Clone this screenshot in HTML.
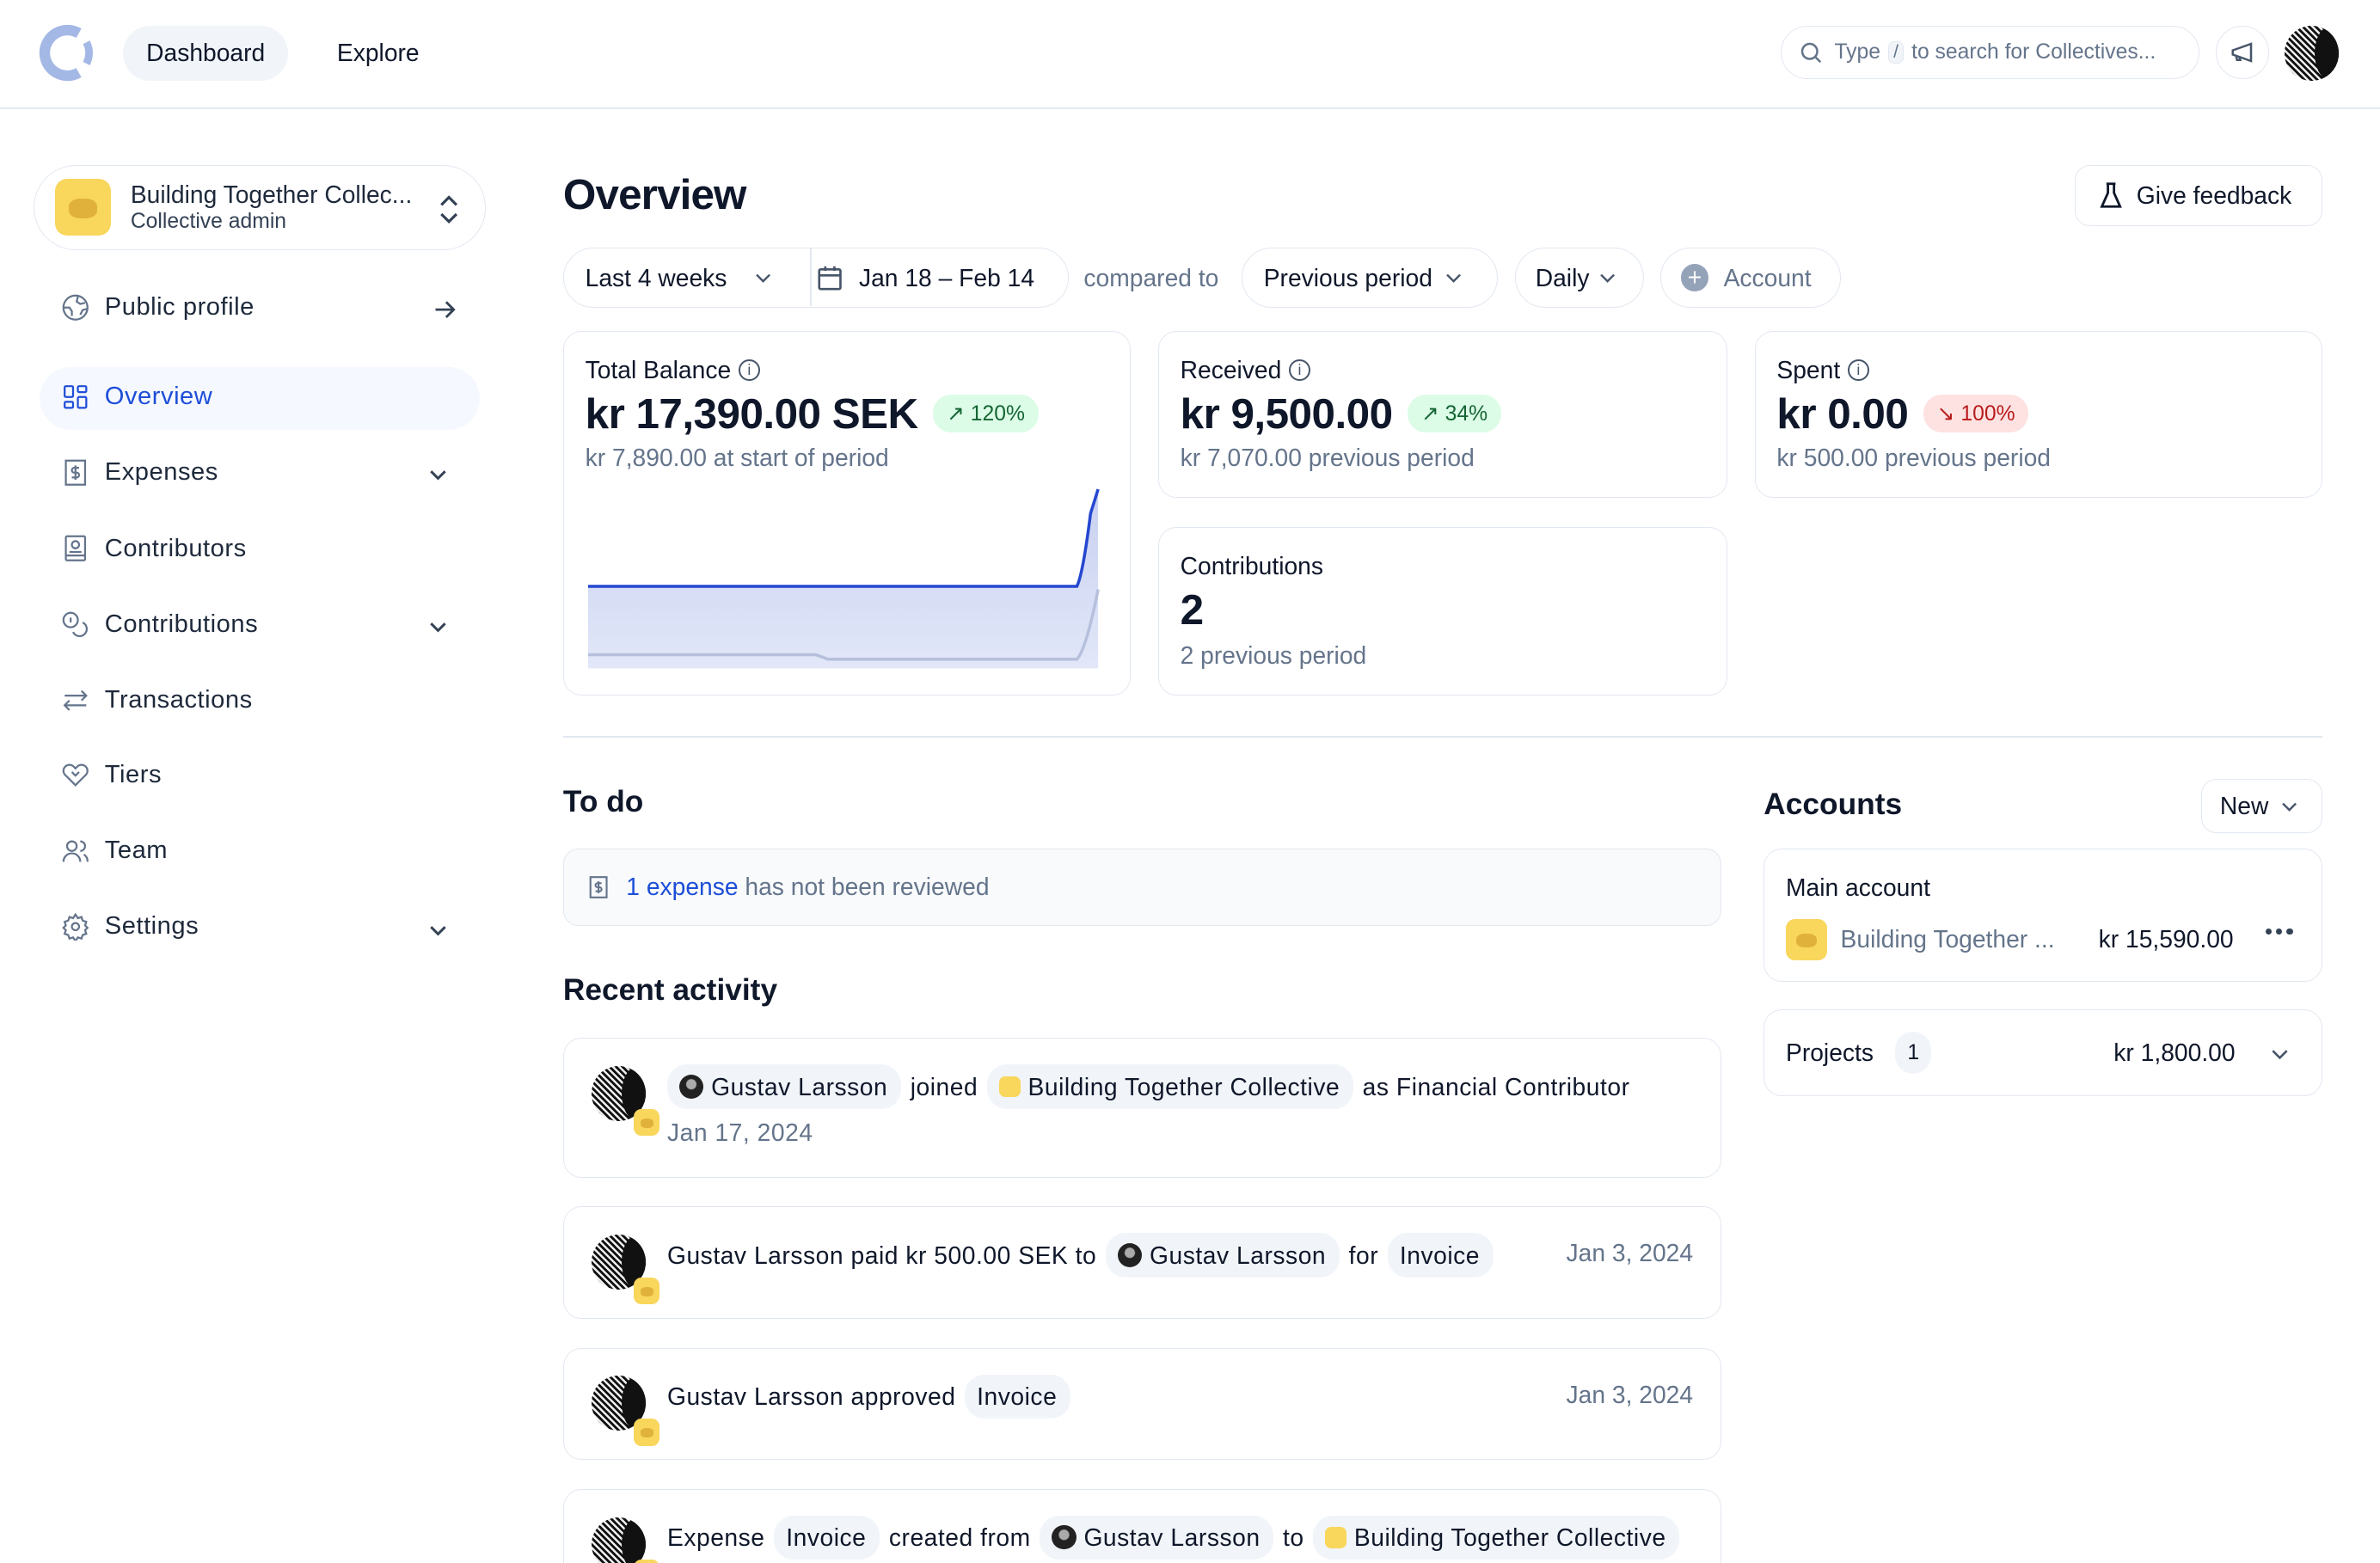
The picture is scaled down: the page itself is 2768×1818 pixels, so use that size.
<!DOCTYPE html>
<html><head><meta charset="utf-8"><style>
*{box-sizing:border-box;margin:0;padding:0}
html,body{width:2768px;height:1818px;overflow:hidden;background:#fff}
#w{zoom:1.76531;width:1568px;height:1030px;position:relative;font-family:"Liberation Sans",sans-serif;color:#0f172a;font-size:16px}
.a{position:absolute}
.b{border:1px solid #e2e8f0}
.g{color:#64748b}
.nav{position:absolute;left:40px;display:flex;align-items:center;font-size:16.5px;color:#1e293b;font-weight:400;letter-spacing:.3px}
.nav svg{width:19px;height:19px;margin-right:10px;stroke:#64748b;fill:none;stroke-width:1.6}
.chev{position:absolute;left:282px;width:13px;height:13px;stroke:#334155;fill:none;stroke-width:1.8}
.card{position:absolute;border:1px solid #e2e8f0;border-radius:12px;background:#fff}
.lbl{font-size:16px;font-weight:500;display:flex;align-items:center}
.big{font-size:28px;font-weight:700;letter-spacing:-.3px}
.pill{display:inline-flex;align-items:center;font-size:14px;border-radius:12px;padding:4px 9px;margin-left:10px}
.btn{position:absolute;border:1px solid #e2e8f0;border-radius:20px;display:flex;align-items:center;font-size:16px;font-weight:500}
.chip{display:inline-flex;align-items:center;background:#f1f5f9;border-radius:13px;height:29px;padding:0 9px 0 8px;margin:0 6px}
.av{width:36px;height:36px;border-radius:50%;background:repeating-linear-gradient(45deg,#111 0 1.5px,#eee 1.5px 3px);position:absolute;overflow:hidden}
.av:after{content:"";position:absolute;left:55%;top:0;width:60%;height:100%;background:#111;border-radius:50%}
.yl{background:#f9d65c;border-radius:5px;position:absolute}
.yl:after{content:"";position:absolute;left:25%;top:35%;width:50%;height:35%;border-radius:40%;background:#d9a933;opacity:.8}
.sm{width:16px;height:16px;border-radius:50%;display:inline-block;margin-right:5px;background:radial-gradient(circle at 50% 40%,#aaa 0 25%,#222 30%)}
.sy{width:14px;height:14px;border-radius:4px;display:inline-block;margin-right:5px;background:#f9d65c}
.act{position:absolute;left:371px;width:763px}
.act .txt{position:absolute;left:68px;font-size:16px;display:flex;align-items:center;height:29px;letter-spacing:.3px;white-space:nowrap}
.date{position:absolute;right:18px;font-size:16px;color:#64748b}
</style></head><body><div id="w">
<!-- header -->
<div class="a" style="left:0;top:71px;width:1568px;height:1px;background:#e2e8f0"></div>
<svg class="a" style="left:25px;top:16px" width="38" height="38" viewBox="0 0 38 38"><path d="M27 6 A15 15 0 1 0 27 32" stroke="#a4b8e6" stroke-width="7" fill="none"/><path d="M32 12 A15 15 0 0 1 32 26" stroke="#a4b8e6" stroke-width="5" fill="none"/></svg>
<div class="a" style="left:81px;top:17px;width:109px;height:36px;border-radius:18px;background:#f1f5f9;font-size:16px;font-weight:500;text-align:center;line-height:36px">Dashboard</div>
<div class="a" style="left:222px;top:17px;line-height:36px;font-size:16px;font-weight:500">Explore</div>
<div class="a b" style="left:1173px;top:17px;width:276px;height:35px;border-radius:18px;display:flex;align-items:center;padding-left:11px;font-size:14px;color:#64748b">
<svg width="17" height="17" viewBox="0 0 24 24" fill="none" stroke="#64748b" stroke-width="2"><circle cx="11" cy="11" r="7"/><path d="M16 16l5 5"/></svg>
<span style="margin-left:7px">Type</span><span style="margin:0 5px;background:#f1f5f9;border:1px solid #e2e8f0;border-radius:4px;padding:0 3px;font-size:12px">/</span><span>to search for Collectives...</span></div>
<div class="a b" style="left:1460px;top:17px;width:35px;height:35px;border-radius:50%;display:flex;align-items:center;justify-content:center"><svg width="17" height="17" viewBox="0 0 24 24" fill="none" stroke="#475569" stroke-width="2"><path d="M3 10v4l3 1 14 5V4L6 9z M6 15l1 4 3 0-1-3"/></svg></div>
<div class="av" style="left:1505px;top:17px;width:36px;height:36px"></div>
<!-- sidebar -->
<div class="a b" style="left:22px;top:109px;width:298px;height:56px;border-radius:28px"></div>
<div class="yl" style="left:36px;top:118px;width:37px;height:37px;border-radius:8px"></div>
<div class="a" style="left:86px;top:119px;font-size:16px;font-weight:500;color:#1e293b">Building Together Collec...</div>
<div class="a" style="left:86px;top:138px;font-size:14px;color:#334155">Collective admin</div>
<svg class="a" style="left:288px;top:128px" width="16" height="20" viewBox="0 0 16 20" fill="none" stroke="#334155" stroke-width="1.8"><path d="M3 7l5-5 5 5M3 13l5 5 5-5"/></svg>
<div class="nav" style="top:193px"><svg viewBox="0 0 24 24"><circle cx="12" cy="12" r="10"/><path d="M2 12h5l2 3v4M14 3l-1 4 3 2 4-1M22 13l-4 1-2 4"/></svg>Public profile</div>
<svg class="a" style="left:285px;top:196px" width="16" height="16" viewBox="0 0 16 16" fill="none" stroke="#334155" stroke-width="1.6"><path d="M2 8h12M9 3l5 5-5 5"/></svg>
<div class="a" style="left:26px;top:242px;width:290px;height:41px;border-radius:21px;background:#f5f8ff"></div>
<div class="nav" style="top:252px;color:#1d4ed8"><svg viewBox="0 0 24 24" style="stroke:#1d4ed8"><rect x="3" y="3" width="7" height="9" rx="1"/><rect x="14" y="3" width="7" height="5" rx="1"/><rect x="14" y="12" width="7" height="9" rx="1"/><rect x="3" y="16" width="7" height="5" rx="1"/></svg>Overview</div>
<div class="nav" style="top:302px"><svg viewBox="0 0 24 24"><path d="M4 2v20h16V2z M12 6v12M15 8h-4a2 2 0 000 4h2a2 2 0 010 4H9"/></svg>Expenses</div>
<svg class="chev" style="top:306px" viewBox="0 0 14 14"><path d="M2 5l5 5 5-5"/></svg>
<div class="nav" style="top:352px"><svg viewBox="0 0 24 24"><rect x="4" y="2" width="16" height="20" rx="1"/><circle cx="12" cy="9" r="3"/><path d="M7 15h10M4 18h16"/></svg>Contributors</div>
<div class="nav" style="top:402px"><svg viewBox="0 0 24 24"><circle cx="8" cy="8" r="6"/><path d="M18 10a6 6 0 11-8 8M8 6v4"/></svg>Contributions</div>
<svg class="chev" style="top:406px" viewBox="0 0 14 14"><path d="M2 5l5 5 5-5"/></svg>
<div class="nav" style="top:452px"><svg viewBox="0 0 24 24"><path d="M3 8h18M17 4l4 4-4 4M21 16H3M7 12l-4 4 4 4"/></svg>Transactions</div>
<div class="nav" style="top:501px"><svg viewBox="0 0 24 24"><path d="M12 21l-9-9a5 5 0 017-7l2 2 2-2a5 5 0 017 7z M9 10l3 3 3-3"/></svg>Tiers</div>
<div class="nav" style="top:551px"><svg viewBox="0 0 24 24"><circle cx="9" cy="8" r="4"/><path d="M2 21a7 7 0 0114 0M16 4a4 4 0 010 8M19 15a6 6 0 013 6"/></svg>Team</div>
<div class="nav" style="top:601px"><svg viewBox="0 0 24 24"><circle cx="12" cy="12" r="3"/><path d="M12 2l2 3 3-1 1 3 3 1-1 3 2 2-2 2 1 3-3 1-1 3-3-1-2 3-2-3-3 1-1-3-3-1 1-3-2-2 2-2-1-3 3-1 1-3 3 1z"/></svg>Settings</div>
<svg class="chev" style="top:606px" viewBox="0 0 14 14"><path d="M2 5l5 5 5-5"/></svg>
<!-- main -->
<div class="a" style="left:371px;top:112px;font-size:28px;font-weight:700;letter-spacing:-.5px">Overview</div>
<div class="btn" style="left:1367px;top:109px;width:163px;height:40px;border-radius:10px;padding-left:15px"><svg width="16" height="18" viewBox="0 0 16 18" fill="none" stroke="#0f172a" stroke-width="1.6"><path d="M5 1h6M6 1v6L2 16h12L10 7V1"/></svg><span style="margin-left:9px">Give feedback</span></div>
<div class="btn" style="left:371px;top:163px;width:333px;height:40px"><span style="margin-left:14px">Last 4 weeks</span><svg style="margin-left:18px" width="12" height="12" viewBox="0 0 14 14" fill="none" stroke="#475569" stroke-width="1.6"><path d="M2 5l5 5 5-5"/></svg><span style="position:absolute;left:162px;top:0;width:1px;height:38px;background:#e2e8f0"></span><svg style="margin-left:30px" width="16" height="17" viewBox="0 0 16 17" fill="none" stroke="#475569" stroke-width="1.5"><rect x="1" y="3" width="14" height="13" rx="1"/><path d="M1 7h14M5 1v3M11 1v3"/></svg><span style="margin-left:11px">Jan 18 – Feb 14</span></div>
<div class="a g" style="left:714px;top:174px;font-size:16px">compared to</div>
<div class="btn" style="left:818px;top:163px;width:169px;height:40px;padding-left:14px">Previous period<svg style="margin-left:8px" width="12" height="12" viewBox="0 0 14 14" fill="none" stroke="#475569" stroke-width="1.6"><path d="M2 5l5 5 5-5"/></svg></div>
<div class="btn" style="left:998px;top:163px;width:85px;height:40px;padding-left:13px">Daily<svg style="margin-left:6px" width="12" height="12" viewBox="0 0 14 14" fill="none" stroke="#475569" stroke-width="1.6"><path d="M2 5l5 5 5-5"/></svg></div>
<div class="btn" style="left:1094px;top:163px;width:119px;height:40px;padding-left:13px;color:#64748b"><span style="width:18px;height:18px;border-radius:50%;background:#94a3b8;color:#fff;font-size:16px;line-height:18px;text-align:center;margin-right:10px">+</span>Account</div>
<!-- cards -->
<div class="card" style="left:371px;top:218px;width:374px;height:240px">
<div class="a lbl" style="left:14px;top:16px">Total Balance <span style="margin-left:5px;width:14px;height:14px;border:1.3px solid #475569;border-radius:50%;font-size:10px;text-align:center;line-height:12px;color:#475569">i</span></div>
<div class="a" style="left:14px;top:38px;display:flex;align-items:center"><span class="big">kr 17,390.00 SEK</span><span class="pill" style="background:#dcfce7;color:#166534">↗ 120%</span></div>
<div class="a g" style="left:14px;top:74px">kr 7,890.00 at start of period</div>
<svg class="a" style="left:16px;top:100px" width="337" height="124" viewBox="0 0 337 124"><defs><linearGradient id="gr" x1="0" y1="0" x2="0" y2="1"><stop offset="0" stop-color="#c7d0f0"/><stop offset="1" stop-color="#e2e7f8"/></linearGradient></defs><path d="M0 68H322Q326 60 331 20L336 4V122H0Z" fill="url(#gr)"/><path d="M0 68H322Q326 60 331 20L336 4" stroke="#2547d0" stroke-width="2" fill="none"/><path d="M0 113H150L158 116H322Q328 110 336 70" stroke="#b6c0dc" stroke-width="2" fill="none"/></svg>
</div>
<div class="card" style="left:763px;top:218px;width:375px;height:110px">
<div class="a lbl" style="left:14px;top:16px">Received <span style="margin-left:5px;width:14px;height:14px;border:1.3px solid #475569;border-radius:50%;font-size:10px;text-align:center;line-height:12px;color:#475569">i</span></div>
<div class="a" style="left:14px;top:38px;display:flex;align-items:center"><span class="big">kr 9,500.00</span><span class="pill" style="background:#dcfce7;color:#166534">↗ 34%</span></div>
<div class="a g" style="left:14px;top:74px">kr 7,070.00 previous period</div></div>
<div class="card" style="left:1156px;top:218px;width:374px;height:110px">
<div class="a lbl" style="left:14px;top:16px">Spent <span style="margin-left:5px;width:14px;height:14px;border:1.3px solid #475569;border-radius:50%;font-size:10px;text-align:center;line-height:12px;color:#475569">i</span></div>
<div class="a" style="left:14px;top:38px;display:flex;align-items:center"><span class="big">kr 0.00</span><span class="pill" style="background:#fee2e2;color:#b91c1c">↘ 100%</span></div>
<div class="a g" style="left:14px;top:74px">kr 500.00 previous period</div></div>
<div class="card" style="left:763px;top:347px;width:375px;height:111px">
<div class="a lbl" style="left:14px;top:16px">Contributions</div>
<div class="a big" style="left:14px;top:38px">2</div>
<div class="a g" style="left:14px;top:75px">2 previous period</div></div>
<div class="a" style="left:371px;top:485px;width:1159px;height:1px;background:#e2e8f0"></div>
<div class="a" style="left:371px;top:517px;font-size:20px;font-weight:700">To do</div>
<div class="a b" style="left:371px;top:559px;width:763px;height:51px;border-radius:10px;background:#f8fafc;display:flex;align-items:center;padding-left:15px;font-size:16px;color:#64748b"><svg width="16" height="17" viewBox="0 0 24 24" fill="none" stroke="#64748b" stroke-width="1.8"><path d="M4 2v20h16V2z M12 6v12M15 8h-4a2 2 0 000 4h2a2 2 0 010 4H9"/></svg><span style="margin-left:10px;color:#1d4ed8">1 expense</span>&nbsp;has not been reviewed</div>
<div class="a" style="left:371px;top:641px;font-size:20px;font-weight:700">Recent activity</div>
<div class="card act" style="top:684px;height:92px"><div class="av" style="left:18px;top:18px"></div><div class="yl" style="left:46px;top:46px;width:17px;height:18px"></div>
<div class="txt" style="top:17px"><span class="chip" style="margin-left:0"><i class="sm"></i>Gustav Larsson</span><span>joined</span><span class="chip"><i class="sy"></i>Building Together Collective</span><span>as Financial Contributor</span></div>
<div class="txt g" style="top:47px">Jan 17, 2024</div></div>
<div class="card act" style="top:795px;height:74px"><div class="av" style="left:18px;top:18px"></div><div class="yl" style="left:46px;top:46px;width:17px;height:18px"></div>
<div class="txt" style="top:17px"><span>Gustav Larsson paid kr 500.00 SEK to</span><span class="chip"><i class="sm"></i>Gustav Larsson</span><span>for</span><span class="chip">Invoice</span></div>
<div class="date" style="top:21px">Jan 3, 2024</div></div>
<div class="card act" style="top:888px;height:74px"><div class="av" style="left:18px;top:18px"></div><div class="yl" style="left:46px;top:46px;width:17px;height:18px"></div>
<div class="txt" style="top:17px"><span>Gustav Larsson approved</span><span class="chip">Invoice</span></div>
<div class="date" style="top:21px">Jan 3, 2024</div></div>
<div class="card act" style="top:981px;height:74px"><div class="av" style="left:18px;top:18px"></div><div class="yl" style="left:46px;top:46px;width:17px;height:18px"></div>
<div class="txt" style="top:17px"><span>Expense</span><span class="chip">Invoice</span><span>created from</span><span class="chip"><i class="sm"></i>Gustav Larsson</span><span>to</span><span class="chip"><i class="sy"></i>Building Together Collective</span></div></div>
<!-- accounts -->
<div class="a" style="left:1162px;top:519px;font-size:20px;font-weight:700">Accounts</div>
<div class="btn" style="left:1450px;top:513px;width:80px;height:36px;border-radius:10px;padding-left:12px">New<svg style="margin-left:8px" width="12" height="12" viewBox="0 0 14 14" fill="none" stroke="#475569" stroke-width="1.6"><path d="M2 5l5 5 5-5"/></svg></div>
<div class="card" style="left:1162px;top:559px;width:368px;height:88px">
<div class="a" style="left:14px;top:16px;font-weight:500">Main account</div>
<div class="yl" style="left:14px;top:46px;width:27px;height:27px;border-radius:6px"></div>
<div class="a g" style="left:50px;top:50px">Building Together ...</div>
<div class="a" style="left:220px;top:50px;font-weight:500">kr 15,590.00</div>
<div class="a" style="left:330px;top:52px;display:flex;gap:3px"><i style="width:4px;height:4px;border-radius:50%;background:#334155"></i><i style="width:4px;height:4px;border-radius:50%;background:#334155"></i><i style="width:4px;height:4px;border-radius:50%;background:#334155"></i></div></div>
<div class="card" style="left:1162px;top:665px;width:368px;height:57px">
<div class="a" style="left:14px;top:19px;font-weight:500">Projects</div>
<div class="a" style="left:86px;top:14px;width:24px;height:28px;border-radius:12px;background:#f1f5f9;text-align:center;line-height:28px;font-size:14px">1</div>
<div class="a" style="left:230px;top:19px;font-weight:500">kr 1,800.00</div>
<svg class="a" style="left:333px;top:22px" width="13" height="13" viewBox="0 0 14 14" fill="none" stroke="#475569" stroke-width="1.6"><path d="M2 5l5 5 5-5"/></svg></div>
</div></body></html>
